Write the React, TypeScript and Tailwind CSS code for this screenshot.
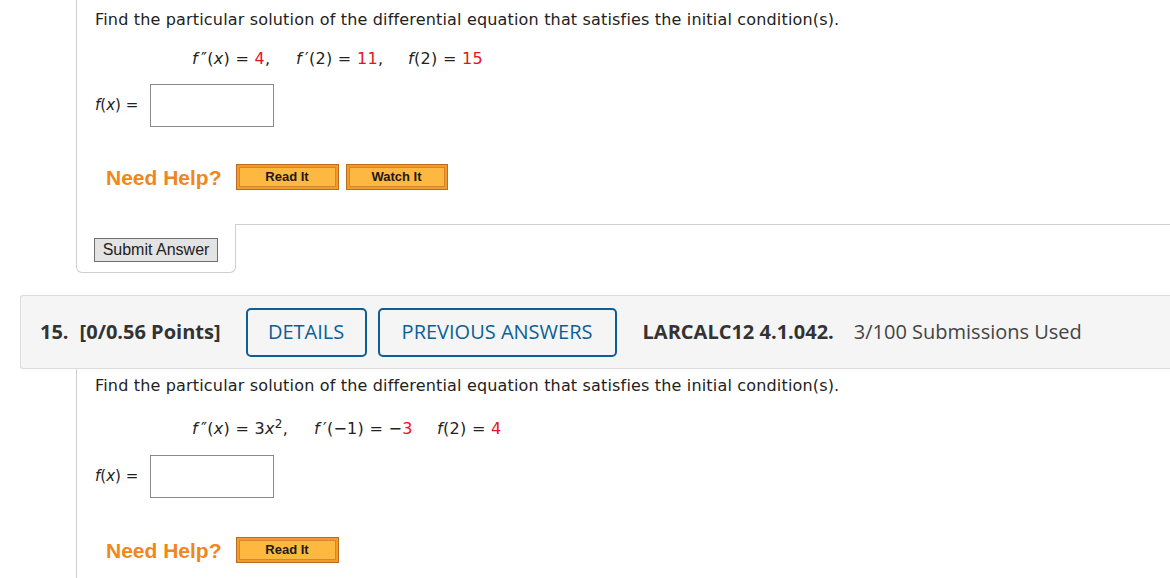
import React from 'react'

const verdana = { fontFamily: '"DejaVu Sans", Verdana, sans-serif' }

const HelpButton = ({ label, w }: { label: string; w: string }) => (
	<div className={`${w} h-[26px] border border-[#b86e22] bg-[#f59a27] p-[2px]`}>
		<div className='h-full border border-[#d3862c] bg-[#fdb842] flex items-center justify-center text-[13px] font-bold text-[#1a1a1a] font-["Liberation_Sans",Arial,sans-serif]'>
			{label}
		</div>
	</div>
)

const NeedHelp = ({ watch }: { watch?: boolean }) => (
	<div className='flex items-center pl-[11px]'>
		<span className='text-[21px] font-bold text-[#f0871d] font-["Liberation_Sans",Arial,sans-serif] leading-none'>Need Help?</span>
		<div className='flex gap-[7px] ml-[14px]'>
			<HelpButton label='Read It' w='w-[103px]' />
			{watch && <HelpButton label='Watch It' w='w-[102px]' />}
		</div>
	</div>
)

const AnswerRow = () => (
	<div className='flex items-center'>
		<span className='w-[55px] text-[15px]'>
			<i>f</i>(<i>x</i>) =
		</span>
		<div className='w-[124px] h-[43px] border border-[#8a8a8a] bg-white'></div>
	</div>
)

const Red = ({ children }: { children: React.ReactNode }) => <span className='text-[#e8121b]'>{children}</span>

const F2 = () => <><i>f</i><span className='ml-[3px]'>″</span></>
const F1 = () => <><i>f</i><span className='ml-[3px]'>′</span></>

const App = () => {
	return (
		<div className='w-[1170px] h-[578px] overflow-hidden bg-white text-[#222]' style={verdana}>
			{/*Question 14*/}
			<div className='ml-[76px] h-[224px] border-l border-[#cfcfcf] pl-[18px] pt-[9px]'>
				<p className='text-[16px] leading-[21px] tracking-[0.17px]'>
					Find the particular solution of the differential equation that satisfies the initial condition(s).
				</p>
				<p className='mt-[18px] pl-[97px] text-[16px] leading-[21px] tracking-[0.3px] flex whitespace-pre'>
					<span className='w-[104px]'><F2 />(<i>x</i>) = <Red>4</Red>,</span>
					<span className='w-[112px]'><F1 />(2) = <Red>11</Red>,</span>
					<span><i>f</i>(2) = <Red>15</Red></span>
				</p>
				<div className='mt-[15px]'>
					<AnswerRow />
				</div>
				<div className='mt-[37px]'>
					<NeedHelp watch />
				</div>
			</div>
			<div className='ml-[76px] flex'>
				<div className='w-[160px] h-[49px] border-l border-r border-b border-[#cfcfcf] rounded-b-[6px] pl-[17px] pt-[14px]'>
					<button className='w-[124px] h-[24px] border border-[#707070] bg-[#e3e3e3] text-[16px] text-[#222] font-["Liberation_Sans",Arial,sans-serif] leading-none'>
						Submit Answer
					</button>
				</div>
				<div className='flex-1 border-t border-[#cfcfcf]'></div>
			</div>

			{/*Question 15 header*/}
			<div className='mt-[22px] ml-[20px] h-[74px] border-y border-l border-[#dcdcdc] rounded-l-[3px] bg-[#f5f5f5] flex items-center pl-[19px] text-[20px] text-[#333] font-["Open_Sans",sans-serif]'>
				<span className='font-bold'>15.</span>
				<span className='font-bold ml-[11px]'>[0/0.56 Points]</span>
				<button className='ml-[25px] w-[121px] h-[49px] border-2 border-[#0b5f97] rounded-[5px] text-[#0b5f97] font-medium'>DETAILS</button>
				<button className='ml-[11px] w-[239px] h-[49px] border-2 border-[#0b5f97] rounded-[5px] text-[#0b5f97] font-medium'>PREVIOUS ANSWERS</button>
				<span className='ml-[26px] font-bold'>LARCALC12 4.1.042.</span>
				<span className='ml-[20px] text-[#444]'>3/100 Submissions Used</span>
			</div>

			{/*Question 15*/}
			<div className='ml-[76px] h-[220px] border-l border-[#cfcfcf] pl-[18px] pt-[6px]'>
				<p className='text-[16px] leading-[21px] tracking-[0.17px]'>
					Find the particular solution of the differential equation that satisfies the initial condition(s).
				</p>
				<p className='mt-[22px] pl-[97px] text-[16px] leading-[21px] tracking-[0.3px] flex whitespace-pre'>
					<span className='w-[122px]'><F2 />(<i>x</i>) = 3<i>x</i><sup className='text-[12px]'>2</sup>,</span>
					<span className='w-[123px]'><F1 />(−1) = −<Red>3</Red></span>
					<span><i>f</i>(2) = <Red>4</Red></span>
				</p>
				<div className='mt-[16px]'>
					<AnswerRow />
				</div>
				<div className='mt-[39px]'>
					<NeedHelp />
				</div>
			</div>
		</div>
	)
}

export default App
